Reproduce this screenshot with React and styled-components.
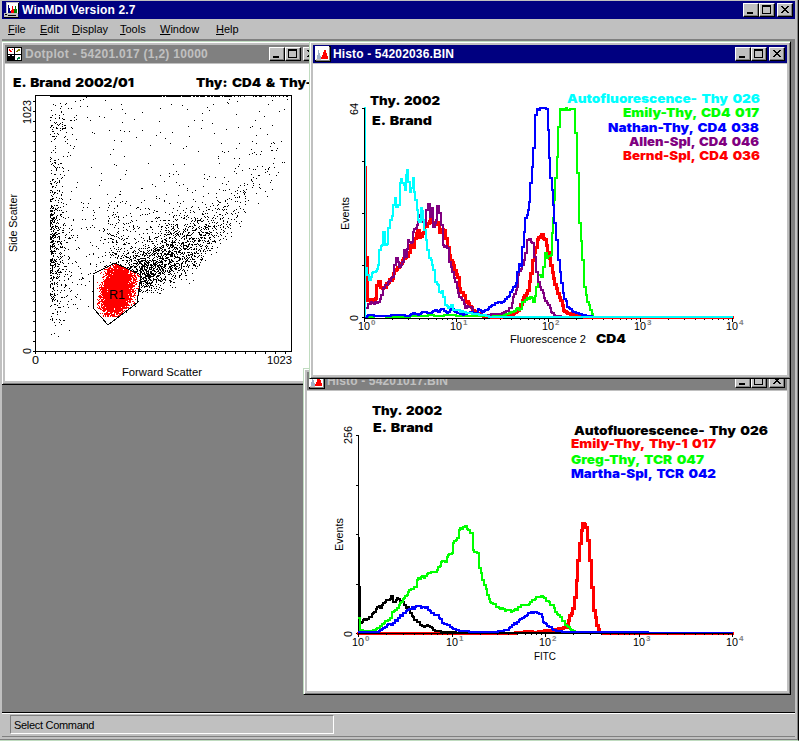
import React from "react";
import styled, { createGlobalStyle } from "styled-components";

const GlobalStyle = createGlobalStyle`
  body {
    margin: 0;
    background: #c0c0c0;
    font-family: "Liberation Sans", Arial, sans-serif;
    font-size: 11px;
    color: #000;
  }
`;

const AppFrame = styled.div`
  box-sizing: border-box;
  position: relative;
  width: 799px;
  height: 741px;
  padding: 1px 1px 0 2px;
  background: #c0c0c0;
  border-right: 1px solid #000;
  border-bottom: 1px solid #c0dcc0;
  box-shadow: inset -1px -1px 0 #808080;
  display: flex;
  flex-direction: column;
  overflow: hidden;
`;

const TitleBar = styled.div`
  display: flex;
  align-items: center;
  flex: none;
  box-sizing: border-box;
  height: 18px;
  padding: 0 2px;
  background: ${(props) => (props.$active ? "#000080" : "#808080")};
  color: ${(props) => (props.$active ? "#fff" : "#c0c0c0")};
`;

const MainTitleBar = styled(TitleBar)`
  width: 793px;
`;

const TitleText = styled.span`
  flex: 1;
  margin-left: 2px;
  font-size: 12px;
  font-weight: bold;
  line-height: 17px;
  letter-spacing: ${(props) => props.$spacing || 0}px;
  white-space: pre;
`;

const TitleIcon = styled.svg`
  flex: none;
  width: 16px;
  height: 16px;
`;

const CaptionButtons = styled.div`
  display: flex;
  flex: none;
`;

const CaptionButton = styled.div`
  box-sizing: border-box;
  width: 16px;
  height: 14px;
  background: #c0c0c0;
  border: 1px solid;
  border-color: #fff #000 #000 #fff;
  box-shadow: inset -1px -1px 0 #808080;
  color: #000;
  svg {
    display: block;
  }
  &:last-child {
    margin-left: 2px;
  }
`;

const MenuBar = styled.div`
  display: flex;
  flex: none;
  box-sizing: border-box;
  height: 20px;
  padding-left: 6px;
  line-height: 20px;
`;

const MenuItem = styled.div`
  width: ${(props) => props.$width}px;
  &::first-letter {
    text-decoration: underline;
  }
`;

const Desktop = styled.div`
  position: relative;
  flex: none;
  box-sizing: border-box;
  width: 793px;
  height: 674px;
  background: #808080;
  border-bottom: 1px solid #000;
  overflow: hidden;
`;

const ChildFrame = styled.div`
  position: absolute;
  left: ${(props) => props.$left}px;
  top: ${(props) => props.$top}px;
  width: ${(props) => props.$width}px;
  height: ${(props) => props.$height}px;
  box-sizing: border-box;
  padding: 3px;
  display: flex;
  flex-direction: column;
  background: #c0c0c0;
  border: 1px solid;
  border-color: #c0dcc0 #000 #000 #c0dcc0;
  box-shadow: inset 1px 1px 0 #fff, inset -1px -1px 0 #808080;
`;

const ChildBody = styled.div`
  flex: 1;
  min-height: 0;
  margin-top: 1px;
  background: #fff;
  svg {
    display: block;
  }
`;

const StatusBar = styled.div`
  flex: none;
  box-sizing: border-box;
  width: 793px;
  height: 24px;
  padding: 1px 0 0 8px;
  border-top: 1px solid #fff;
  border-bottom: 1px solid #808080;
`;

const StatusPanel = styled.div`
  box-sizing: border-box;
  width: 324px;
  height: 19px;
  padding-left: 3px;
  border: 1px solid;
  border-color: #808080 #fff #fff #808080;
  line-height: 18px;
  letter-spacing: -0.3px;
`;

const Caption = styled.text`
  font-family: "Liberation Sans", Arial, sans-serif;
  font-size: 11px;
  fill: ${(props) => props.$color || "#000"};
`;

const Exponent = styled.text`
  font-family: "Liberation Sans", Arial, sans-serif;
  font-size: 8px;
  font-weight: bold;
  fill: #808080;
`;

const Heading = styled.text`
  font-family: "Inter", "Liberation Sans", sans-serif;
  font-size: 12.3px;
  font-weight: 900;
  word-spacing: 1.6px;
  fill: ${(props) => props.$color || "#000"};
`;

const Curve = styled.path`
  fill: none;
  stroke: ${(props) => props.$color};
  stroke-width: ${(props) => props.$width || 2}px;
  stroke-linecap: square;
  shape-rendering: crispEdges;
`;

/* ---------- small drawings ---------- */

const MainIcon = () => (
  <TitleIcon viewBox="0 0 16 16" shapeRendering="crispEdges">
    <path d="M2 0h13v12H2z" fill="#c0c0c0" />
    <path d="M3 1h11v10H3z" fill="#fff" />
    <path d="M4 11V3h1v3h1v3h1v2z" fill="#000080" />
    <path d="M7 11V8h1V4h1v3h1v4z" fill="#f00" />
    <path d="M10 11V7h1V4h1v3h1v4z" fill="#008000" />
    <path d="M0 11h3v1h11v3H0z" fill="#c0c0c0" />
    <path d="M1 12h2v1H1zM4 13h8v1H4zM14 1h1v11h-1zM0 15h15v1H0z" fill="#000" />
  </TitleIcon>
);

const DotIcon = () => (
  <TitleIcon viewBox="0 0 16 16" shapeRendering="crispEdges">
    <path d="M0 1h15v14H0z" fill="#000" />
    <path d="M1 2h6v6H1zM8 2h6v6H8zM8 9h6v5H8zM1 9h2v1H1zM5 9h2v1H5z" fill="#fff" />
    <path d="M2 3h1v1h1v1h1v1H3V5H2zM5 3h1v1H5z" fill="#f00" />
    <path d="M9 5h1V4h1V3h2v2h-2v1H9z" fill="#808000" />
    <path d="M10 13v-1h1v-1h2v2h-2v1h-1z" fill="#008040" />
  </TitleIcon>
);

const HistoIcon = () => (
  <TitleIcon viewBox="0 0 16 16" shapeRendering="crispEdges">
    <path d="M0 0h16v16H0z" fill="#000" />
    <path d="M0 0h14v14H0z" fill="#fff" />
    <path d="M14 1h1v14H1v-1h13z" fill="#808080" />
    <path d="M2 13V9h1V4h1v3h1v3h1v3z" fill="#a0b0c8" />
    <path d="M6 13v-2h1V9h1V6h1V4h2v3h1v3h1v3z" fill="#f00" />
    <path d="M1 13h5v1H1z" fill="#c0c0c0" />
  </TitleIcon>
);

const WindowButtons = () => (
  <CaptionButtons>
    <CaptionButton>
      <svg width="14" height="12" shapeRendering="crispEdges">
        <path d="M3 8h6v2H3z" />
      </svg>
    </CaptionButton>
    <CaptionButton>
      <svg width="14" height="12" shapeRendering="crispEdges">
        <path d="M2 1h9v9H2zM3 3v6h7V3z" fillRule="evenodd" />
      </svg>
    </CaptionButton>
    <CaptionButton>
      <svg width="14" height="12" shapeRendering="crispEdges">
        <path d="M3 2h2v1h1v1h2V3h1V2h2v1h-1v1H9v1H8v1h1v1h1v1h1v1H9V8H8V7H6v1H5v1H3V8h1V7h1V6h1V5H5V4H4V3H3z" />
      </svg>
    </CaptionButton>
  </CaptionButtons>
);

const ChildWindow = ({ title, icon, active, spacing, left, top, width, height, children }) => (
  <ChildFrame $left={left} $top={top} $width={width} $height={height}>
    <TitleBar $active={active}>
      {icon}
      <TitleText $spacing={spacing}>{title}</TitleText>
      <WindowButtons />
    </TitleBar>
    <ChildBody>{children}</ChildBody>
  </ChildFrame>
);

/* text stretched to a given width, optionally turned to read upwards */
const Fitted = ({ as: Tag = Caption, x, y, w, up, color, children }) => (
  <Tag
    x={x}
    y={y}
    $color={color}
    textLength={w}
    lengthAdjust="spacingAndGlyphs"
    transform={up ? `rotate(-90 ${x} ${y})` : undefined}
  >
    {children}
  </Tag>
);

const createRandom = (seed) => () => {
  seed = (seed * 1664525 + 1013904223) % 4294967296;
  return seed / 4294967296;
};

/* ---------- dot plot ---------- */

const gate = [
  [115, 263],
  [141, 275],
  [137, 303],
  [108, 325],
  [94, 309],
  [93, 274],
];

const insideGate = (x, y) => {
  let inside = false;
  for (let i = 0, j = gate.length - 1; i < gate.length; j = i++) {
    const [xi, yi] = gate[i];
    const [xj, yj] = gate[j];
    if (yi > y !== yj > y && x < ((xj - xi) * (y - yi)) / (yj - yi) + xi) {
      inside = !inside;
    }
  }
  return inside;
};

// lowest y an event may have to the right of the gate
const lowerEdge = (x) => {
  if (x < 137) return 335;
  if (x < 185) return 300 - (x - 137) * 0.36;
  if (x < 215) return 283 - (x - 185) * 1.15;
  return 248 - (x - 215) * 1.02;
};

const buildEvents = () => {
  const random = createRandom(54201);
  const gauss = () => {
    const u = Math.max(random(), 1e-6);
    return Math.sqrt(-2 * Math.log(u)) * Math.cos(2 * Math.PI * random());
  };
  const black = [];
  const red = [];
  const dot = (list, x, y) => list.push(`M${Math.floor(x)} ${Math.floor(y)}h1v1h-1z`);
  const addBlack = (x, y) => {
    if (x < 50 || x > 290 || y < 97 || y > 338) return;
    if (y > lowerEdge(x) + gauss() * 4 || insideGate(x, y)) return;
    dot(black, x, y);
  };

  // debris at low forward scatter
  for (let i = 0; i < 480; i++) addBlack(50 - Math.log(1 - random()) * 5.5, 244 + gauss() * 36);
  for (let i = 0; i < 190; i++) addBlack(50 + Math.abs(gauss()) * 13, 97 + random() * 240);
  for (let i = 0; i < 50; i++) addBlack(62 + gauss() * 7, 125 + gauss() * 10);
  // scattered background
  for (let i = 0; i < 360; i++) addBlack(50 + random() * 240, 97 + random() * 215);
  for (let i = 0; i < 130; i++) addBlack(60 + random() * 90, 200 + random() * 100);
  // column above the gate
  for (let i = 0; i < 170; i++) addBlack(117 + gauss() * 7, 248 + gauss() * 24);
  // diagonal cloud
  for (let i = 0; i < 1250; i++) {
    const t = Math.abs(gauss()) * 0.5;
    addBlack(136 + t * 92 + gauss() * 10, 275 - t * 54 + gauss() * 14);
  }
  for (let i = 0; i < 330; i++) addBlack(140 + gauss() * 9, 276 + gauss() * 10);
  for (let i = 0; i < 620; i++) addBlack(180 + gauss() * 25, 248 + gauss() * 22);
  for (let i = 0; i < 120; i++) {
    const t = random();
    addBlack(200 + t * 75, 232 - t * 70 + gauss() * 19);
  }
  // events clipped at the top channel
  for (let x = 50; x < 290; x++) {
    if (random() < (x < 155 ? 1 : 1.8 - x / 190)) dot(black, x, 96);
  }
  // gated lymphocytes
  for (let i = 0; i < 6200; i++) {
    const x = 117 + gauss() * 7;
    const y = 290 + gauss() * 12 - (x - 117) * 0.4;
    if (insideGate(x, y) && y < 317 && x > 97) dot(red, x, y);
  }
  for (let i = 0; i < 480; i++) {
    const x = 123 + gauss() * 12;
    const y = 282 + gauss() * 12;
    if (insideGate(x, y) && x > 97) dot(red, x, y);
  }
  return { black: black.join(""), red: red.join("") };
};

const events = buildEvents();
const gridSteps = Array.from({ length: 26 }, (_, i) => i * 10);

const DotPlot = () => (
  <svg width="316" height="317" viewBox="5 64 316 317">
    <g shapeRendering="crispEdges">
      <path d={events.black} />
      <path d={events.red} fill="#f00" />
      <path d="M35 95h257v257H35zM36 96v255h255V96z" fillRule="evenodd" />
      {gridSteps.map((d) => (
        <path key={d} d={`M33 ${351 - d}h2v1h-2zM${35 + d} 352h1v2h-1z`} />
      ))}
      <polygon points={gate.map((p) => p.join()).join(" ")} fill="none" stroke="#000" />
    </g>
    <Fitted as={Heading} x={13} y={87} w={121}>E. Brand 2002/01</Fitted>
    <Fitted as={Heading} x={196} y={87} w={122}>Thy: CD4 &amp; Thy-1</Fitted>
    <Fitted x={31} y={124} w={24} up>1023</Fitted>
    <Fitted x={31} y={354} w={6} up>0</Fitted>
    <Fitted x={17} y={252} w={58} up>Side Scatter</Fitted>
    <Fitted x={32} y={364} w={7}>0</Fitted>
    <Fitted x={267} y={364} w={25}>1023</Fitted>
    <Fitted x={122} y={376} w={80}>Forward Scatter</Fitted>
    <Caption x={109} y={299} style={{ fontSize: 12.5 }}>R1</Caption>
  </svg>
);

/* ---------- histograms ---------- */

// turns "x,y x,y" into a staircase with one step per channel
const staircase = (points, base, offset) => {
  const random = createRandom(points.length * 97);
  const list = points.split(" ").map((p) => p.split(",").map(Number));
  let d = `M${list[0][0] + offset} ${list[0][1] + offset}`;
  for (let i = 1; i < list.length; i++) {
    const [x0, y0] = list[i - 1];
    const [x1, y1] = list[i];
    const steps = Math.max(1, Math.round((x1 - x0) / 1.5));
    for (let s = 1; s <= steps; s++) {
      const x = Math.round(x0 + ((x1 - x0) * s) / steps);
      let y = y0 + ((y1 - y0) * s) / steps;
      if (s < steps && base - y > 6) y += (random() - 0.5) * 3;
      d += `H${x + offset}V${Math.round(y) + offset}`;
    }
  }
  return d;
};

const Curves = ({ curves, base }) =>
  curves.map((c, i) => (
    <Curve
      key={i}
      $color={c.color}
      $width={c.width}
      d={staircase(c.points, base, c.width % 2 ? 0.5 : 0)}
    />
  ));

const LogAxis = ({ x, y, decade, labelDy }) => (
  <g>
    {[0, 1, 2, 3, 4].map((n) => {
      const tick = Math.round(x + n * decade);
      return (
        <g key={n}>
          <path d={`M${tick} ${y}h1v4h-1z`} shapeRendering="crispEdges" />
          {n < 4 &&
            [2, 3, 4, 5, 6, 7, 8, 9].map((m) => (
              <path
                key={m}
                d={`M${Math.round(tick + Math.log10(m) * decade)} ${y + 1}h1v1h-1z`}
                shapeRendering="crispEdges"
              />
            ))}
          <Fitted x={tick - 6} y={y + labelDy} w={12}>10</Fitted>
          <Exponent x={tick + 7} y={y + labelDy - 5}>{n}</Exponent>
        </g>
      );
    })}
  </g>
);

const cd4Curves = [
  {
    color: "#f00",
    width: 3,
    points:
      "366,257 367,300 370,301 375,298 376,285 378,281 380,287 383,287 388,282 392,278 393,273 397,267 400,263 403,258 406,256 408,252 410,245 413,247 414,238 417,230 419,237 423,232 424,226 427,223 430,218 433,225 437,222 439,232 443,230 445,238 447,247 449,255 453,265 457,277 459,288 463,295 465,302 468,303 472,310 477,313 483,316 497,317 510,315 517,310 520,304 523,297 527,290 530,273 532,260 535,247 537,239 541,234 544,239 547,252 550,265 553,278 557,293 560,300 563,310 567,313 585,317 600,317 732,317",
  },
  { color: "#f00", width: 1, points: "366,166 366,260" },
  {
    color: "#0f0",
    points:
      "365,317 380,316 392,317 425,316 430,315 437,316 450,315 460,316 500,316 510,313 514,311 517,308 520,309 522,302 525,300 530,297 533,302 536,287 538,275 542,277 543,267 545,253 547,258 551,255 552,233 553,218 554,200 555,178 557,157 558,127 560,109 573,109 575,133 577,173 579,223 582,260 584,287 587,302 590,310 593,317",
  },
  {
    color: "#800080",
    points:
      "366,308 368,304 372,303 378,302 381,295 383,288 388,282 392,277 394,265 396,258 399,267 402,262 404,250 405,257 408,240 412,242 413,232 417,225 418,215 422,222 424,225 426,210 428,204 430,217 432,208 433,227 436,220 437,206 439,213 441,225 443,245 447,248 449,262 452,272 455,282 458,293 462,300 465,308 470,307 473,313 483,315 497,314 503,313 510,308 513,297 517,287 518,275 522,265 525,253 527,240 529,239 532,243 534,257 536,272 538,282 541,290 544,298 548,305 551,312 555,316 565,317",
  },
  {
    color: "#00f",
    points:
      "365,317 368,315 380,316 400,315 408,316 413,313 418,315 422,312 430,313 435,310 438,312 441,309 447,313 451,309 455,312 463,315 470,312 476,313 478,309 482,312 488,309 495,303 502,302 507,297 512,290 516,283 517,272 519,264 521,266 522,247 524,232 525,218 528,210 529,202 530,183 532,167 533,148 535,115 537,109 546,109 548,130 549,158 550,178 552,190 553,205 554,223 556,240 558,260 561,283 563,293 567,307 573,312 583,315 593,317",
  },
  {
    color: "#0ff",
    points:
      "366,268 367,275 369,280 372,273 373,272 377,269 378,265 379,250 382,245 383,232 385,245 387,244 388,228 390,220 392,216 393,205 395,198 396,207 398,205 400,183 401,179 402,183 405,190 406,175 407,170 408,182 410,192 411,188 413,178 414,192 415,200 417,210 418,220 419,222 421,208 422,211 423,220 424,230 426,240 427,250 429,258 432,265 433,270 435,282 438,285 439,292 442,291 443,297 445,305 448,308 452,305 453,310 458,310 463,312 473,314 483,315 490,317 732,317",
  },
];

const CD4Histogram = () => (
  <svg width="474" height="311" viewBox="313 64 474 311">
    <g shapeRendering="crispEdges">
      <path d="M364 108h1v210h-1zM364 318h369v1H364z" />
      {[108, 161, 213, 265, 317].map((y) => (
        <path key={y} d={`M362 ${y}h3v1h-3z`} />
      ))}
    </g>
    <Curves curves={cd4Curves} base={317} />
    <g shapeRendering="crispEdges">
      <path d="M364 107h2v210h-2z" fill="#0ff" />
      <path d="M364 108h1v210h-1z" />
    </g>
    <LogAxis x={364} y={318} decade={92} labelDy={12} />
    <Fitted as={Heading} x={370} y={105} w={70}>Thy. 2002</Fitted>
    <Fitted as={Heading} x={372} y={125} w={60}>E. Brand</Fitted>
    <Fitted as={Heading} x={567} y={103} w={193} color="#0ff">Autofluorescence- Thy 026</Fitted>
    <Fitted as={Heading} x={623} y={117} w={136} color="#0f0">Emily-Thy, CD4 017</Fitted>
    <Fitted as={Heading} x={608} y={132} w={151} color="#00f">Nathan-Thy, CD4 038</Fitted>
    <Fitted as={Heading} x={629} y={146} w={130} color="#800080">Allen-Spl, CD4 046</Fitted>
    <Fitted as={Heading} x={623} y={160} w={137} color="#f00">Bernd-Spl, CD4 036</Fitted>
    <Fitted x={358} y={115} w={12} up>64</Fitted>
    <Fitted x={358} y={321} w={6} up>0</Fitted>
    <Fitted x={349} y={230} w={33} up>Events</Fitted>
    <Fitted x={510} y={343} w={76}>Fluorescence 2</Fitted>
    <Fitted as={Heading} x={596} y={343} w={30}>CD4</Fitted>
  </svg>
);

const fitcCurves = [
  {
    color: "#f00",
    width: 3,
    points:
      "358,633 510,633 527,631 535,632 545,630 552,630 560,628 565,627 568,620 572,608 574,597 576,580 577,560 579,543 581,530 582,523 585,527 587,540 589,560 591,587 593,610 596,625 599,632 605,633 732,633",
  },
  {
    color: "#000",
    points:
      "359,538 359,587 360,623 363,620 367,619 370,617 373,613 377,607 380,608 383,603 388,600 391,596 393,602 397,598 401,602 405,605 409,610 413,617 417,622 422,626 430,627 435,631 447,632 463,633 560,633",
  },
  {
    color: "#0f0",
    points:
      "359,618 360,630 370,632 377,628 382,624 385,621 390,618 392,612 397,608 400,603 404,598 408,592 412,589 415,587 417,580 421,577 425,576 430,573 437,570 441,562 445,562 448,555 452,553 453,543 457,538 459,530 463,527 465,526 468,530 471,533 473,550 477,553 479,568 482,580 484,585 487,595 490,602 497,607 503,609 512,611 520,607 527,605 533,600 538,597 543,597 547,601 552,605 555,612 560,617 565,625 573,631 578,633",
  },
  {
    color: "#00f",
    points:
      "359,632 377,632 385,627 393,623 398,618 404,613 409,609 415,607 422,607 427,607 431,613 437,615 442,623 447,625 453,629 460,631 477,632 493,632 507,630 512,625 517,622 522,618 528,613 534,612 540,614 543,622 550,627 553,630 563,632 732,633",
  },
];

const FitcHistogram = () => (
  <svg width="480" height="300" viewBox="307 391 480 300">
    <g shapeRendering="crispEdges">
      <path d="M358 435h1v199h-1z" />
      {[435, 485, 534, 584, 633].map((y) => (
        <path key={y} d={`M356 ${y}h3v1h-3z`} />
      ))}
    </g>
    <Curves curves={fitcCurves} base={633} />
    <path d="M358 633h375v1H358z" shapeRendering="crispEdges" />
    <LogAxis x={358} y={633} decade={93.5} labelDy={13} />
    <Fitted as={Heading} x={372} y={415} w={70}>Thy. 2002</Fitted>
    <Fitted as={Heading} x={373} y={432} w={60}>E. Brand</Fitted>
    <Fitted as={Heading} x={574} y={435} w={194}>Autofluorescence- Thy 026</Fitted>
    <Fitted as={Heading} x={571} y={448} w={145} color="#f00">Emily-Thy, Thy-1 017</Fitted>
    <Fitted as={Heading} x={571} y={464} w={133} color="#0f0">Greg-Thy, TCR 047</Fitted>
    <Fitted as={Heading} x={571} y={478} w={145} color="#00f">Martha-Spl, TCR 042</Fitted>
    <Fitted x={352} y={444} w={18} up>256</Fitted>
    <Fitted x={352} y={637} w={6} up>0</Fitted>
    <Fitted x={343} y={551} w={33} up>Events</Fitted>
    <Fitted x={534} y={660} w={22}>FITC</Fitted>
  </svg>
);

const App = () => (
  <>
    <GlobalStyle />
    <AppFrame>
      <MainTitleBar $active>
        <MainIcon />
        <TitleText $spacing={0.17}>WinMDI Version 2.7</TitleText>
        <WindowButtons />
      </MainTitleBar>
      <MenuBar>
        <MenuItem $width={32}>File</MenuItem>
        <MenuItem $width={32}>Edit</MenuItem>
        <MenuItem $width={48}>Display</MenuItem>
        <MenuItem $width={40}>Tools</MenuItem>
        <MenuItem $width={56}>Window</MenuItem>
        <MenuItem $width={40}>Help</MenuItem>
      </MenuBar>
      <Desktop>
        <ChildWindow
          title="Dotplot - 54201.017 (1,2) 10000"
          icon={<DotIcon />}
          spacing={0.29}
          left={-1}
          top={2}
          width={324}
          height={344}
        >
          <DotPlot />
        </ChildWindow>
        <ChildWindow
          title="Histo - 54201017.BIN"
          icon={<HistoIcon />}
          spacing={0.15}
          left={301}
          top={329}
          width={488}
          height={327}
        >
          <FitcHistogram />
        </ChildWindow>
        <ChildWindow
          title="Histo - 54202036.BIN"
          icon={<HistoIcon />}
          active
          spacing={0.15}
          left={307}
          top={2}
          width={482}
          height={338}
        >
          <CD4Histogram />
        </ChildWindow>
      </Desktop>
      <StatusBar>
        <StatusPanel>Select Command</StatusPanel>
      </StatusBar>
    </AppFrame>
  </>
);

export default App;
